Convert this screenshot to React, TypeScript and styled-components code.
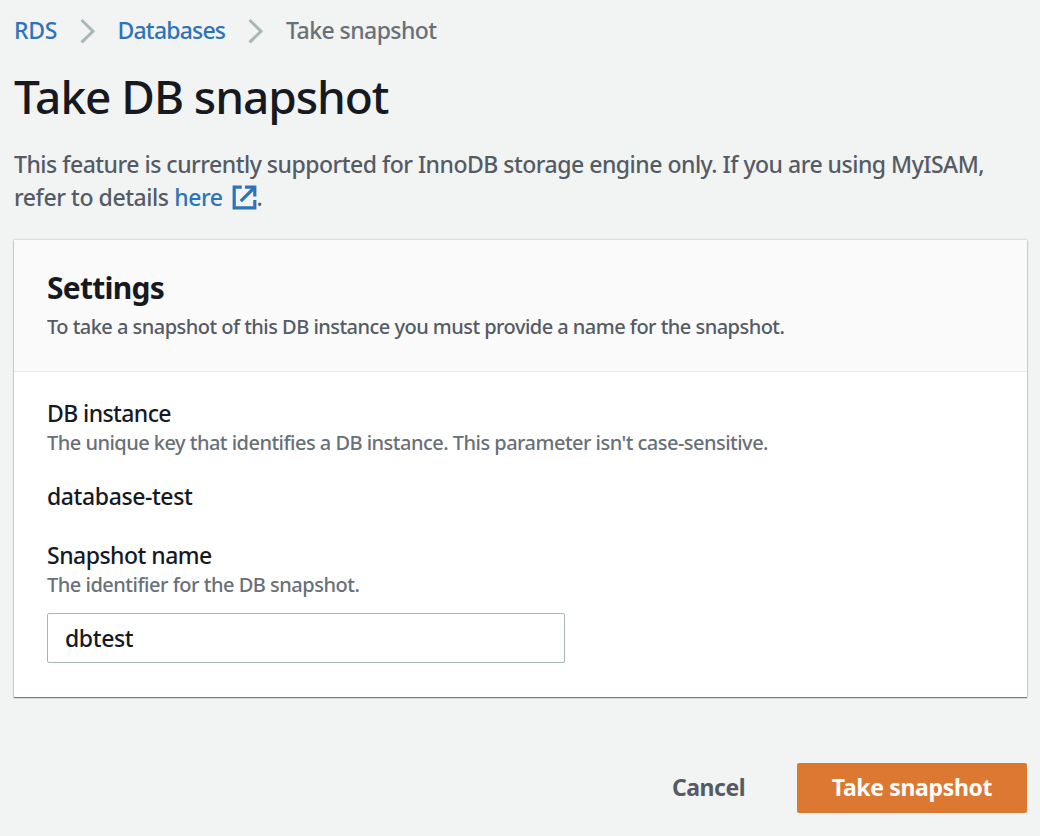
import React, { useState } from "react";
import styled, { createGlobalStyle } from "styled-components";

const GlobalStyle = createGlobalStyle`
  * { box-sizing: border-box; }
  body {
    margin: 0;
    background: #f2f3f3;
    color: #16191f;
    font-family: "Noto Sans", "Open Sans", sans-serif;
    font-size: 23px;
    font-weight: 500;
    line-height: 33px;
  }
`;

const Page = styled.main`
  height: 836px;
  padding: 14px 13px 0;
  overflow: hidden;
`;

const Breadcrumbs = styled.nav`
  display: flex;
  align-items: center;
  height: 33px;
  padding-left: 1px;
`;

const Crumb = styled.span<{ $width: number; $spacing: number; $current?: boolean }>`
  width: ${(p) => p.$width}px;
  color: ${(p) => (p.$current ? "#687078" : "#2e73b8")};
  letter-spacing: ${(p) => p.$spacing}px;
  white-space: nowrap;
`;

const Chevron = styled.svg`
  width: 17px;
  height: 26px;
  margin: 0 22px 0 20px;
  flex: none;
`;

const Title = styled.h1`
  margin: 21px 0 0 1px;
  font-size: 46px;
  line-height: 57px;
  font-weight: 500;
  letter-spacing: -1.05px;
  white-space: nowrap;
`;

const Intro = styled.p`
  margin: 23px 0 0 1px;
  color: #545b64;
  white-space: nowrap;
`;

const Line = styled.span<{ $spacing: number }>`
  display: block;
  letter-spacing: ${(p) => p.$spacing}px;
`;

const Link = styled.a`
  color: #2e73b8;
  text-decoration: none;
`;

const ExternalIcon = styled.svg`
  width: 25px;
  height: 25px;
  margin-left: 9px;
  vertical-align: -4px;
`;

const Card = styled.section`
  height: 457px;
  margin: 26px 0 0 1px;
  width: 1013px;
  background: #fff;
  box-shadow: 0 1px 1px 0 rgba(0, 28, 36, 0.5), 0 0 2px 0 rgba(0, 28, 36, 0.3);
`;

const CardHeader = styled.header`
  height: 132px;
  padding: 29px 33px 0;
  background: #fafafa;
  border-bottom: 1px solid #eaeded;
`;

const Heading = styled.h2`
  margin: 0 0 7px;
  font-size: 30px;
  line-height: 37px;
  font-weight: 700;
  letter-spacing: -0.75px;
`;

const Description = styled.p<{ $spacing: number; $muted?: boolean }>`
  margin: 0;
  font-size: 20px;
  line-height: 27px;
  color: ${(p) => (p.$muted ? "#687078" : "#545b64")};
  letter-spacing: ${(p) => p.$spacing}px;
  white-space: nowrap;
`;

const CardBody = styled.div`
  padding: 25px 33px 0;
`;

const Label = styled.label<{ $spacing: number }>`
  display: block;
  height: 32px;
  letter-spacing: ${(p) => p.$spacing}px;
`;

const Value = styled.div`
  margin: 24px 0 26px;
  letter-spacing: -0.4px;
`;

const Input = styled.input`
  display: block;
  width: 518px;
  height: 50px;
  margin: 15px 0 0;
  padding: 0 17px;
  border: 1px solid #aab7b8;
  border-radius: 2px;
  background: #fff;
  color: #16191f;
  font: inherit;
  letter-spacing: -0.4px;
  outline: none;
`;

const Actions = styled.footer`
  display: flex;
  justify-content: flex-end;
  margin-top: 66px;
`;

const Button = styled.button<{ $primary?: boolean }>`
  width: ${(p) => (p.$primary ? 230 : 177)}px;
  height: 50px;
  padding: 0 0 1px;
  border: 0;
  border-radius: 2px;
  background: ${(p) => (p.$primary ? "#dd7832" : "transparent")};
  color: ${(p) => (p.$primary ? "#fff" : "#545b64")};
  font: inherit;
  font-weight: 700;
  letter-spacing: ${(p) => (p.$primary ? -0.35 : -0.45)}px;
  white-space: nowrap;
`;

const Separator = () => (
  <Chevron viewBox="0 0 17 26" fill="none" aria-hidden="true">
    <path d="M2.5 2L14 13.2L2.5 24.4" stroke="#aab7b8" strokeWidth="3" />
  </Chevron>
);

export default function App() {
  const [name, setName] = useState("dbtest");
  return (
    <>
      <GlobalStyle />
      <Page>
        <Breadcrumbs>
          <Crumb $width={44.5} $spacing={-0.35}>RDS</Crumb>
          <Separator />
          <Crumb $width={109.5} $spacing={-0.8}>Databases</Crumb>
          <Separator />
          <Crumb $width={160} $spacing={-0.55} $current>Take snapshot</Crumb>
        </Breadcrumbs>
        <Title>Take DB snapshot</Title>
        <Intro>
          <Line $spacing={-0.5}>
            This feature is currently supported for InnoDB storage engine only. If you are using MyISAM,
          </Line>
          <Line $spacing={-0.43}>
            refer to details{" "}
            <Link>
              here
              <ExternalIcon viewBox="0 0 25 25" fill="none" stroke="#2e73b8" strokeWidth="3.2" aria-hidden="true">
                <path d="M9.8 2.2H2.2V22.8H22.8V15" />
                <path d="M13 2.2H22.8V11.5M22 3L8.8 16.2" />
              </ExternalIcon>
            </Link>
            .
          </Line>
        </Intro>
        <Card>
          <CardHeader>
            <Heading>Settings</Heading>
            <Description $spacing={-0.53}>
              To take a snapshot of this DB instance you must provide a name for the snapshot.
            </Description>
          </CardHeader>
          <CardBody>
            <Label as="div" $spacing={-0.6}>DB instance</Label>
            <Description $spacing={-0.52} $muted>
              The unique key that identifies a DB instance. This parameter isn't case-sensitive.
            </Description>
            <Value>database-test</Value>
            <Label htmlFor="snapshot-name" $spacing={-0.52}>Snapshot name</Label>
            <Description $spacing={-0.49} $muted>The identifier for the DB snapshot.</Description>
            <Input id="snapshot-name" value={name} onChange={(e) => setName(e.target.value)} />
          </CardBody>
        </Card>
        <Actions>
          <Button>Cancel</Button>
          <Button $primary>Take snapshot</Button>
        </Actions>
      </Page>
    </>
  );
}
